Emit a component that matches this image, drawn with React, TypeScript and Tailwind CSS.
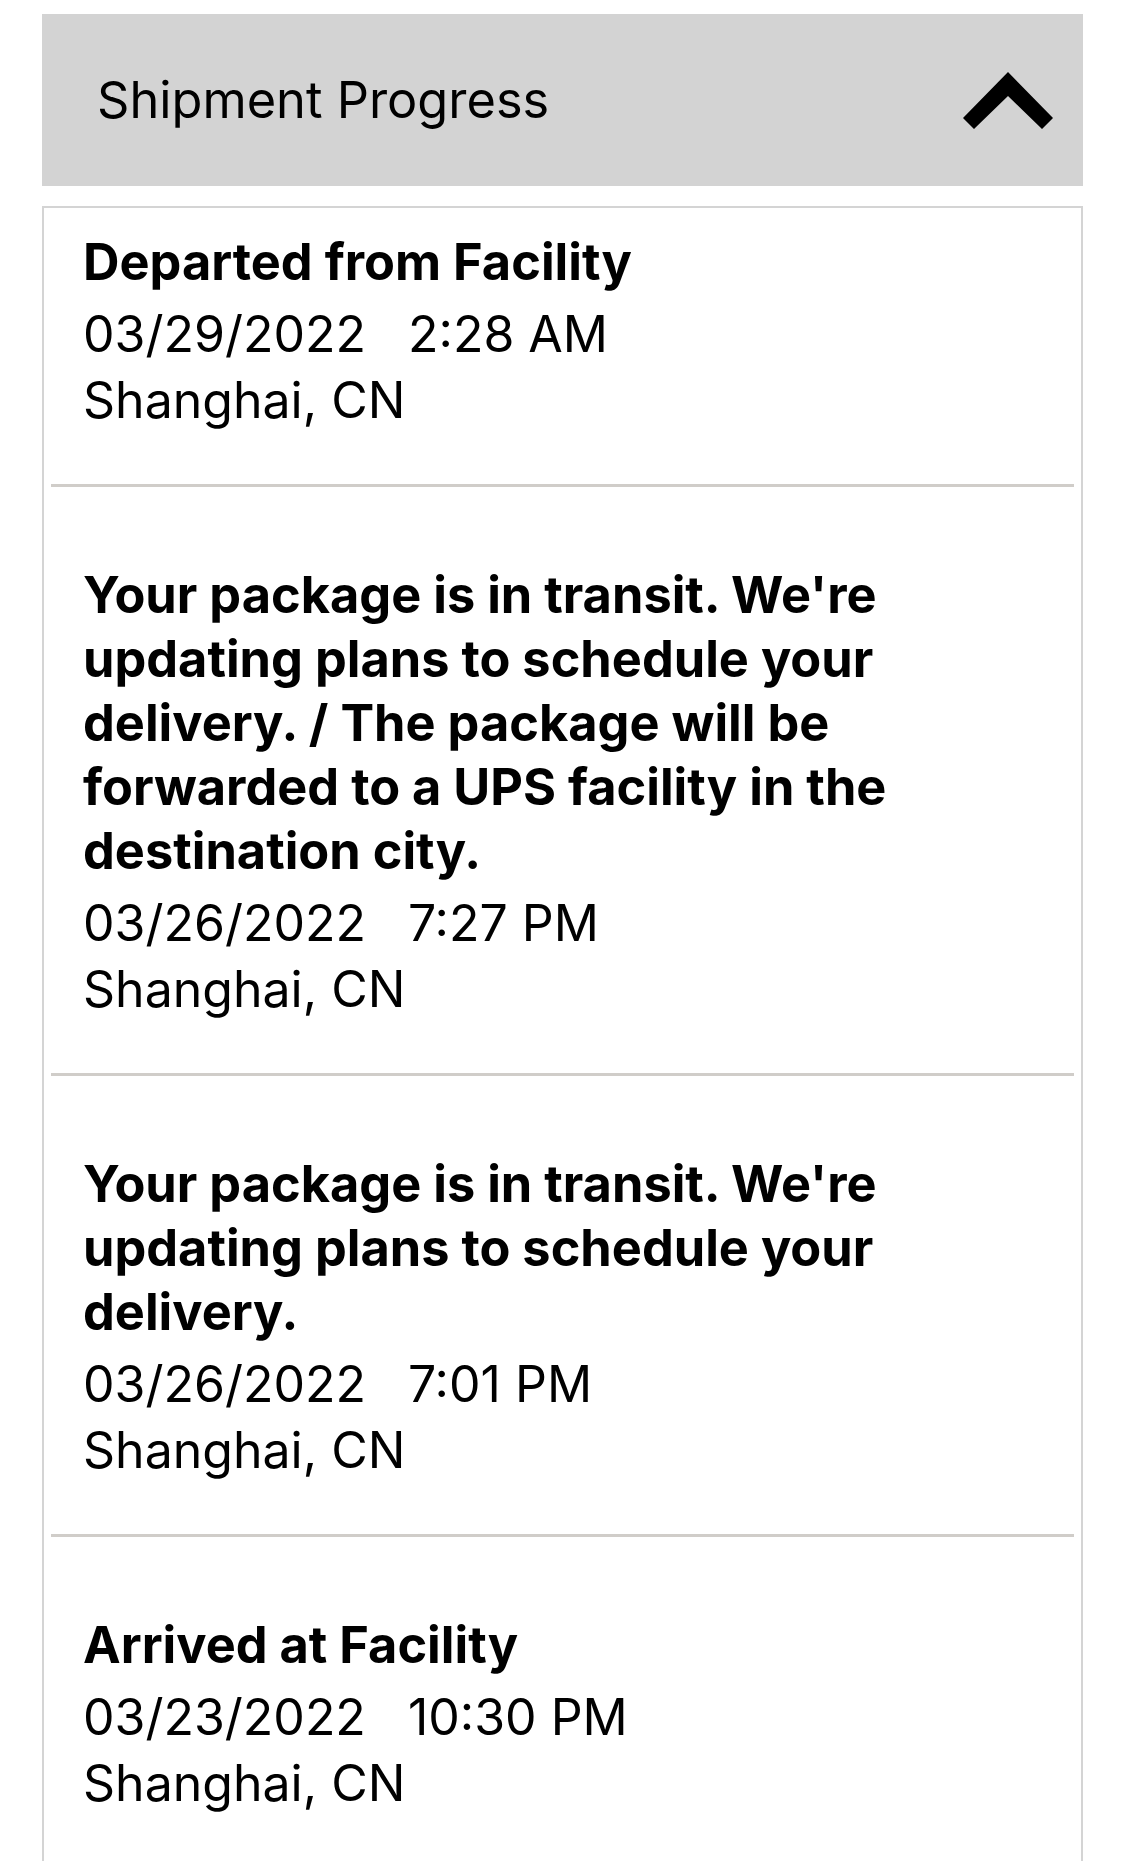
const events = [
  {
    title: "Departed from Facility",
    date: "03/29/2022",
    time: "2:28 AM",
    place: "Shanghai, CN",
  },
  {
    title:
      "Your package is in transit. We're updating plans to schedule your delivery. / The package will be forwarded to a UPS facility in the destination city.",
    date: "03/26/2022",
    time: "7:27 PM",
    place: "Shanghai, CN",
  },
  {
    title:
      "Your package is in transit. We're updating plans to schedule your delivery.",
    date: "03/26/2022",
    time: "7:01 PM",
    place: "Shanghai, CN",
  },
  {
    title: "Arrived at Facility",
    date: "03/23/2022",
    time: "10:30 PM",
    place: "Shanghai, CN",
  },
];

function ChevronUp() {
  return (
    <svg width="90" height="57" viewBox="0 0 90 57" className="shrink-0">
      <polygon points="0,46 45,0 90,46 79,57 45,24 11,57" fill="#000" />
    </svg>
  );
}

export default function App() {
  return (
    <div className="min-h-screen overflow-hidden bg-white px-[42px] pt-[14px] text-black font-['Inter','Liberation_Sans',sans-serif]">
      <div className="flex h-[172px] items-center justify-between bg-[#d3d3d3] pl-[55px] pr-[30px]">
        <span className="text-[50.5px] leading-none">Shipment Progress</span>
        <ChevronUp />
      </div>

      <div className="mt-[20px] border-2 border-b-0 border-[#d4d4d4] px-[7px]">
        {events.map((e, i) => (
          <div key={i}>
            {i > 0 && <div className="h-[3px] bg-[#d0cdc9]" />}
            <div
              className={`px-[32px] pb-[51px] ${
                i === 0 ? "pt-[22px]" : "pt-[76px]"
              }`}
            >
              <div className="pr-[20px] text-[50.5px] font-bold leading-[64px]">
                {e.title}
              </div>
              <div className="mt-[7px] flex gap-[42px] text-[50px] leading-[66px]">
                <span>{e.date}</span>
                <span>{e.time}</span>
              </div>
              <div className="text-[50px] leading-[66px]">{e.place}</div>
            </div>
          </div>
        ))}
      </div>
    </div>
  );
}
